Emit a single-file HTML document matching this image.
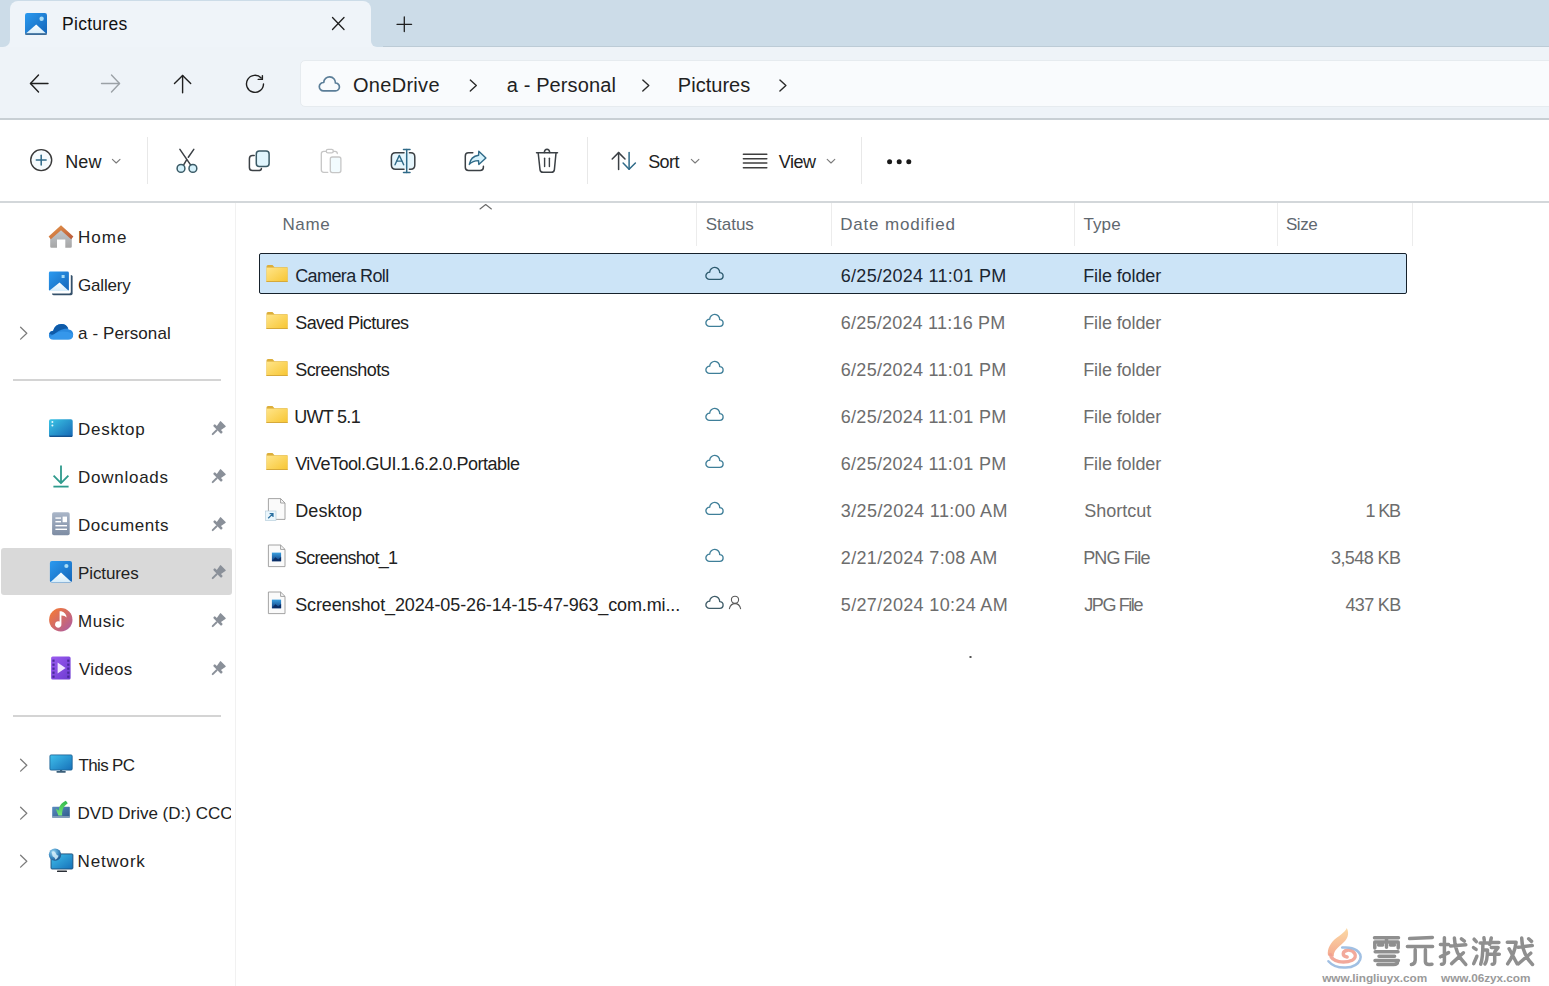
<!DOCTYPE html>
<html><head><meta charset="utf-8"><title>Pictures - File Explorer</title>
<style>
*{margin:0;padding:0;box-sizing:border-box}
html,body{width:1549px;height:986px;overflow:hidden;background:#fff;font-family:"Liberation Sans",sans-serif;color:#1a1a1a}
.a{position:absolute}
.t{position:absolute;white-space:nowrap;line-height:1}
#ov{position:absolute;left:0;top:0}
</style></head><body>
<div class="a" style="left:0px;top:0px;width:1549px;height:47px;background:#ccdce8"></div>
<div class="a" style="left:0px;top:46px;width:1549px;height:1px;background:#bccbd6"></div>
<div class="a" style="left:0px;top:36px;width:20px;height:14px;background:#eff4f9"></div>
<div class="a" style="left:0px;top:36px;width:10px;height:11px;background:#ccdce8;border-radius:0 0 7px 0"></div>
<div class="a" style="left:362px;top:36px;width:20px;height:14px;background:#eff4f9"></div>
<div class="a" style="left:371px;top:36px;width:12px;height:11px;background:#ccdce8;border-radius:0 0 0 6px"></div>
<div class="a" style="left:10px;top:1px;width:361px;height:50px;background:#eff4f9;border-radius:8px 8px 0 0"></div>
<div class="a" style="left:0px;top:47px;width:1549px;height:71px;background:#eef3f8"></div>
<div class="a" style="left:300px;top:60px;width:1260px;height:47px;background:#f9fbfd;border-radius:5px;border:1px solid #e6ebef"></div>
<div class="a" style="left:0px;top:118px;width:1549px;height:2px;background:#c8cfd4"></div>
<div class="a" style="left:0px;top:201px;width:1549px;height:2px;background:#d3d7da"></div>
<div class="a" style="left:147px;top:137px;width:1px;height:47px;background:#e8e8e8"></div>
<div class="a" style="left:587px;top:137px;width:1px;height:47px;background:#e8e8e8"></div>
<div class="a" style="left:861px;top:137px;width:1px;height:47px;background:#e8e8e8"></div>
<div class="a" style="left:235px;top:203px;width:1px;height:783px;background:#f1f1f1"></div>
<div class="a" style="left:1px;top:548px;width:231px;height:47px;background:#d9d9d9;border-radius:3px"></div>
<div class="a" style="left:13px;top:379px;width:208px;height:2px;background:#d4d4d4"></div>
<div class="a" style="left:13px;top:715px;width:208px;height:2px;background:#d4d4d4"></div>
<div class="a" style="left:696px;top:203px;width:1px;height:43px;background:#ececec"></div>
<div class="a" style="left:831px;top:203px;width:1px;height:43px;background:#ececec"></div>
<div class="a" style="left:1074px;top:203px;width:1px;height:43px;background:#ececec"></div>
<div class="a" style="left:1277px;top:203px;width:1px;height:43px;background:#ececec"></div>
<div class="a" style="left:1412px;top:203px;width:1px;height:43px;background:#ececec"></div>
<div class="a" style="left:259px;top:253px;width:1148px;height:41px;background:#cce4f7;border:1.5px solid #16212b;border-radius:2px"></div>
<svg id="ov" width="1549" height="986" viewBox="0 0 1549 986">
<defs>
<linearGradient id="gPic" x1="0" y1="0" x2="1" y2="1"><stop offset="0" stop-color="#2b9af0"/><stop offset="1" stop-color="#1565b8"/></linearGradient>
<linearGradient id="gMnt" x1="0" y1="0" x2="0" y2="1"><stop offset="0" stop-color="#ffffff"/><stop offset="1" stop-color="#d5ecfa"/></linearGradient>
<linearGradient id="gRoof" x1="0" y1="0" x2="1" y2="1"><stop offset="0" stop-color="#e89a4a"/><stop offset="1" stop-color="#b8583a"/></linearGradient>
<linearGradient id="gHouse" x1="0" y1="0" x2="0" y2="1"><stop offset="0" stop-color="#c4cad0"/><stop offset="1" stop-color="#a6a6a6"/></linearGradient>
<linearGradient id="gOD" x1="0" y1="0" x2="0" y2="1"><stop offset="0" stop-color="#0f5fb0"/><stop offset="1" stop-color="#2b8fe0"/></linearGradient>
<linearGradient id="gDesk" x1="0" y1="0" x2="1" y2="1"><stop offset="0" stop-color="#3cc6e6"/><stop offset="1" stop-color="#1566b4"/></linearGradient>
<linearGradient id="gDoc" x1="0" y1="0" x2="0" y2="1"><stop offset="0" stop-color="#aab6c8"/><stop offset="1" stop-color="#7d8ca3"/></linearGradient>
<linearGradient id="gMus" x1="0" y1="0" x2="1" y2="1"><stop offset="0" stop-color="#fb7c2c"/><stop offset="1" stop-color="#a85aa8"/></linearGradient>
<linearGradient id="gVid" x1="0" y1="0" x2="1" y2="1"><stop offset="0" stop-color="#9b5cf0"/><stop offset="1" stop-color="#6c3ad0"/></linearGradient>
<linearGradient id="gMon" x1="0" y1="0" x2="1" y2="1"><stop offset="0" stop-color="#40c0ec"/><stop offset="1" stop-color="#1670b8"/></linearGradient>
<linearGradient id="gDvd" x1="0" y1="0" x2="1" y2="1"><stop offset="0" stop-color="#5a8cc0"/><stop offset="1" stop-color="#2d5a8a"/></linearGradient>
<linearGradient id="gGrn" x1="0" y1="0" x2="0" y2="1"><stop offset="0" stop-color="#2fb84a"/><stop offset="1" stop-color="#7ae87a"/></linearGradient>
<radialGradient id="gGlobe" cx="0.35" cy="0.3" r="0.75"><stop offset="0" stop-color="#9ad6f2"/><stop offset="0.6" stop-color="#3a88c0"/><stop offset="1" stop-color="#1c4f86"/></radialGradient>
<linearGradient id="gFold" x1="0" y1="0" x2="1" y2="1"><stop offset="0" stop-color="#ffe58a"/><stop offset="1" stop-color="#f7c531"/></linearGradient>
<linearGradient id="gImg" x1="0" y1="0" x2="0" y2="1"><stop offset="0" stop-color="#3ba0e0"/><stop offset="1" stop-color="#0e3c80"/></linearGradient>
<symbol id="folder" overflow="visible">
 <path d="M0.5 1.5 Q0.5 0 2 0 L6.5 0 L8.5 2.2 L21.5 2.2 L21.5 17 L0.5 17 Z" fill="#dcae3a"/>
 <rect x="0.5" y="2.6" width="21" height="14.4" fill="url(#gFold)"/>
 <rect x="0.5" y="16" width="21" height="1" fill="#d6a93a"/>
</symbol>
<symbol id="pin" overflow="visible">
 <g transform="translate(5.4,9.0) rotate(45)" fill="#8a9099">
  <path d="M-3.4 -8.4 L3.4 -8.4 Q4 -8.4 3.8 -7.6 L2.8 -1.4 L-2.8 -1.4 L-3.8 -7.6 Q-4 -8.4 -3.4 -8.4 Z"/>
  <rect x="-5.8" y="-2.2" width="11.6" height="2.6" rx="1.1"/>
  <rect x="-0.95" y="0" width="1.9" height="7.4" rx="0.9"/>
 </g>
</symbol>
<symbol id="scloud" overflow="visible">
 <path d="M4.2 12.6 A3.6 3.6 0 1 1 4.404 5.406 A5 5 0 1 1 14.396 5.799 A3.4 3.4 0 1 1 14.4 12.6 Z" fill="none" stroke-linejoin="round"/>
</symbol>
<symbol id="chev" overflow="visible"><polyline points="0.5,0.5 6.5,6 0.5,11.5" fill="none" stroke-width="1.4" stroke-linecap="round" stroke-linejoin="round"/></symbol>
</defs>
<g transform="translate(25,13)"><rect x="0" y="0" width="22" height="21.6" rx="2.2" fill="url(#gPic)"/><path d="M0.6 20.8 L11.2 11.6 L21.4 20.8 Z" fill="url(#gMnt)"/><rect x="0.3" y="20.4" width="21.4" height="1.3" fill="#1d4f7c"/><circle cx="16.6" cy="5.8" r="2.2" fill="#a6dcf7"/></g>
<line x1="332.5" y1="17.5" x2="344" y2="29.5" stroke="#1f1f1f" stroke-width="1.3" stroke-linecap="round" />
<line x1="344" y1="17.5" x2="332.5" y2="29.5" stroke="#1f1f1f" stroke-width="1.3" stroke-linecap="round" />
<line x1="404.3" y1="17" x2="404.3" y2="31.5" stroke="#1f1f1f" stroke-width="1.3" stroke-linecap="round" />
<line x1="397" y1="24.3" x2="411.6" y2="24.3" stroke="#1f1f1f" stroke-width="1.3" stroke-linecap="round" />
<line x1="30.5" y1="83.5" x2="48" y2="83.5" stroke="#1f1f1f" stroke-width="1.4" stroke-linecap="round" />
<polyline points="38.5,75 30.5,83.5 38.5,92" stroke="#1f1f1f" stroke-width="1.4" fill="none" stroke-linecap="round" stroke-linejoin="round" />
<line x1="101.5" y1="83.5" x2="119.5" y2="83.5" stroke="#9ba1a6" stroke-width="1.4" stroke-linecap="round" />
<polyline points="111.5,75 119.5,83.5 111.5,92" stroke="#9ba1a6" stroke-width="1.4" fill="none" stroke-linecap="round" stroke-linejoin="round" />
<line x1="182.6" y1="75.5" x2="182.6" y2="92.7" stroke="#1f1f1f" stroke-width="1.4" stroke-linecap="round" />
<polyline points="174.5,83.5 182.6,75.5 190.7,83.5" stroke="#1f1f1f" stroke-width="1.4" fill="none" stroke-linecap="round" stroke-linejoin="round" />
<path d="M263.5 83.9 A8.5 8.5 0 1 1 261.2 78.0" stroke="#1f1f1f" stroke-width="1.4" fill="none" stroke-linecap="round" stroke-linejoin="round" />
<polyline points="262.4,75.6 262.4,79.4 258.2,79.4" stroke="#1f1f1f" stroke-width="1.4" fill="none" stroke-linecap="round" stroke-linejoin="round" />
<g transform="translate(318.6,76.2) scale(1.17)"><use href="#scloud" x="0" y="0" stroke="#5b7e98" stroke-width="1.45"/></g>
<use href="#chev" x="469.8" y="79.6" stroke="#2a2a2a"/>
<use href="#chev" x="642.3" y="79.6" stroke="#2a2a2a"/>
<use href="#chev" x="779.4" y="79.6" stroke="#2a2a2a"/>
<circle cx="41.2" cy="160.1" r="10.5" fill="#f6fbfd" stroke="#3a3a3a" stroke-width="1.4"/>
<line x1="41.2" y1="155.2" x2="41.2" y2="165" stroke="#2f6a88" stroke-width="1.5" stroke-linecap="round" />
<line x1="36.3" y1="160.1" x2="46.1" y2="160.1" stroke="#2f6a88" stroke-width="1.5" stroke-linecap="round" />
<polyline points="112.4,159.3 116.2,163 120.0,159.3" stroke="#7a7a7a" stroke-width="1.1" fill="none" stroke-linecap="round" stroke-linejoin="round" />
<polyline points="691.3,159.3 695.0999999999999,163 698.9,159.3" stroke="#7a7a7a" stroke-width="1.1" fill="none" stroke-linecap="round" stroke-linejoin="round" />
<polyline points="827.2,159.3 831.0,163 834.8000000000001,159.3" stroke="#7a7a7a" stroke-width="1.1" fill="none" stroke-linecap="round" stroke-linejoin="round" />
<line x1="179.9" y1="149.4" x2="190.4" y2="164.6" stroke="#3b4045" stroke-width="1.5" stroke-linecap="round" />
<line x1="193.8" y1="149.4" x2="188.3" y2="157.2" stroke="#3b4045" stroke-width="1.5" stroke-linecap="round" />
<line x1="186.6" y1="159.8" x2="183.8" y2="164.6" stroke="#3b4045" stroke-width="1.5" stroke-linecap="round" />
<circle cx="181" cy="168.4" r="3.9" fill="#d4f1fb" stroke="#3a5a66" stroke-width="1.5"/><circle cx="192.9" cy="168.4" r="3.9" fill="#d4f1fb" stroke="#3a5a66" stroke-width="1.5"/>
<path d="M254.2 155.6 L252.6 155.6 Q249.4 155.6 249.4 158.8 L249.4 167.4 Q249.4 170.5 252.6 170.5 L258.4 170.5 Q261.2 170.5 261.4 168.6" stroke="#3b4045" stroke-width="1.5" fill="none" stroke-linecap="round" stroke-linejoin="round" />
<rect x="256.3" y="151" width="12.8" height="15.6" rx="3" fill="#e0f5fd" stroke="#3a5a66" stroke-width="1.5"/>
<path d="M327.8 172.3 L323.8 172.3 Q321.3 172.3 321.3 169.8 L321.3 153.8 Q321.3 151.4 323.8 151.4 L326.2 151.4 M333.4 151.4 L335 151.4 Q337.3 151.4 337.3 153.6" stroke="#c6c6c6" stroke-width="1.3" fill="none" stroke-linecap="round" stroke-linejoin="round" />
<rect x="326.3" y="149.3" width="7" height="3.6" rx="1.6" fill="none" stroke="#c6c6c6" stroke-width="1.3"/>
<rect x="330.3" y="157" width="10.6" height="15.6" rx="2" fill="#f2fbfe" stroke="#c6c6c6" stroke-width="1.3"/>
<rect x="392" y="153.2" width="22" height="15.6" rx="4" fill="#e6f6fd"/>
<path d="M404 152.8 L395.6 152.8 Q391.4 152.8 391.4 157 L391.4 165.1 Q391.4 169.3 395.6 169.3 L404 169.3" stroke="#3b4045" stroke-width="1.5" fill="none" stroke-linecap="round" stroke-linejoin="round" />
<path d="M409.4 152.8 L410.8 152.8 Q414.8 152.8 414.8 157 L414.8 165.1 Q414.8 169.3 410.8 169.3 L409.4 169.3" stroke="#3b4045" stroke-width="1.5" fill="none" stroke-linecap="round" stroke-linejoin="round" />
<line x1="406.7" y1="149.5" x2="406.7" y2="172.5" stroke="#2f6a88" stroke-width="1.5" stroke-linecap="round" />
<line x1="403.5" y1="149.5" x2="410" y2="149.5" stroke="#2f6a88" stroke-width="1.5" stroke-linecap="round" />
<line x1="403.5" y1="172.5" x2="410" y2="172.5" stroke="#2f6a88" stroke-width="1.5" stroke-linecap="round" />
<polyline points="395,164.8 399.3,155.4 403.7,164.8" stroke="#2f6a88" stroke-width="1.4" fill="none" stroke-linecap="round" stroke-linejoin="round" />
<line x1="396.7" y1="161.2" x2="401.9" y2="161.2" stroke="#2f6a88" stroke-width="1.3" stroke-linecap="round" />
<path d="M472.8 152.8 L468.5 152.8 Q465.3 152.8 465.3 156 L465.3 167.3 Q465.3 170.5 468.5 170.5 L480.2 170.5 Q483.4 170.5 483.4 167.3 L483.4 166.3" stroke="#3b4045" stroke-width="1.5" fill="none" stroke-linecap="round" stroke-linejoin="round" />
<path d="M469.3 164.4 Q470.6 156.4 478.6 155.2 L478.8 151.2 L485.9 157.9 L478.8 164.4 L478.5 160.6 Q472.6 160.6 469.3 164.4 Z" stroke="#2f6a88" stroke-width="1.4" fill="#d6f2fc" stroke-linecap="round" stroke-linejoin="round" />
<line x1="536.5" y1="152.8" x2="557.5" y2="152.8" stroke="#3b4045" stroke-width="1.5" stroke-linecap="round" />
<path d="M544.2 152.6 Q544.6 149.3 547 149.3 Q549.4 149.3 549.8 152.6" stroke="#3b4045" stroke-width="1.4" fill="none" stroke-linecap="round" stroke-linejoin="round" />
<path d="M538.2 153 L540 169.6 Q540.3 172.3 543 172.3 L551.4 172.3 Q554.1 172.3 554.4 169.6 L556 153" stroke="#3b4045" stroke-width="1.5" fill="none" stroke-linecap="round" stroke-linejoin="round" />
<line x1="544.6" y1="158.3" x2="544.6" y2="166.5" stroke="#3b4045" stroke-width="1.4" stroke-linecap="round" />
<line x1="549.4" y1="158.3" x2="549.4" y2="166.5" stroke="#3b4045" stroke-width="1.4" stroke-linecap="round" />
<line x1="618.6" y1="152.6" x2="618.6" y2="169.5" stroke="#3b4045" stroke-width="1.5" stroke-linecap="round" />
<polyline points="612.2,159 618.6,152.6 625,159" stroke="#3b4045" stroke-width="1.5" fill="none" stroke-linecap="round" stroke-linejoin="round" />
<line x1="629.1" y1="152.6" x2="629.1" y2="169.3" stroke="#2f6a88" stroke-width="1.5" stroke-linecap="round" />
<polyline points="623.1,163 629.1,169.3 635.4,163" stroke="#2f6a88" stroke-width="1.5" fill="none" stroke-linecap="round" stroke-linejoin="round" />
<line x1="743.4" y1="154.2" x2="766.8" y2="154.2" stroke="#3f3f3f" stroke-width="1.5" stroke-linecap="round" />
<line x1="743.4" y1="158.7" x2="766.8" y2="158.7" stroke="#3f3f3f" stroke-width="1.5" stroke-linecap="round" />
<line x1="743.4" y1="163.1" x2="766.8" y2="163.1" stroke="#3f3f3f" stroke-width="1.5" stroke-linecap="round" />
<line x1="743.4" y1="167.7" x2="766.8" y2="167.7" stroke="#3f3f3f" stroke-width="1.5" stroke-linecap="round" />
<circle cx="889.6" cy="161.8" r="2.5" fill="#1a1a1a"/>
<circle cx="899.2" cy="161.8" r="2.5" fill="#1a1a1a"/>
<circle cx="908.8" cy="161.8" r="2.5" fill="#1a1a1a"/>
<polyline points="480,209 485.7,204.5 491.4,209" stroke="#6b6b6b" stroke-width="1.1" fill="none" stroke-linecap="round" stroke-linejoin="round" />
<g><path d="M50.2 237.6 L50.2 246.6 Q50.2 247.8 51.4 247.8 L57 247.8 L57 239.6 L65.3 239.6 L65.3 247.8 L70.6 247.8 Q71.8 247.8 71.8 246.6 L71.8 237.6 L61 228.4 Z" fill="url(#gHouse)"/><path d="M48.6 236.4 L61 225.2 L73.4 236.4 L71.2 239.2 L61 230.2 L50.8 239.2 Z" fill="url(#gRoof)"/></g>
<g><rect x="52" y="275" width="20.6" height="20.2" rx="1.6" fill="#34506a"/><rect x="50.6" y="273.4" width="20.2" height="20" rx="1.4" fill="#ffffff"/><rect x="48.9" y="271.6" width="20" height="19.4" rx="1.4" fill="url(#gPic)"/><path d="M48.9 291 L59.6 282.4 L68.9 291 Z" fill="url(#gMnt)"/><rect x="61.6" y="275" width="3" height="3" fill="#a6dcf7"/></g>
<path d="M53.4 339.6 Q48.9 339.6 48.9 335.2 Q48.9 331.2 53.2 330.8 Q55 324 61.4 324 Q66.8 324 68.6 329.4 Q73.2 330 73.2 334.6 Q73.2 339.6 68.2 339.6 Z" fill="#2a8ae0"/><path d="M49.2 333.6 Q50.2 331 53.2 330.8 Q55 324 61.4 324 Q66.2 324 68.2 328.4 Q61 328.6 55.4 333.2 Q52 336 49.2 333.6 Z" fill="#0e5aa8"/><path d="M49.6 337.4 Q56 332 62 331.6 Q68 331.4 73 334 Q73 339.6 68.2 339.6 L53.4 339.6 Q50.4 339.6 49.6 337.4 Z" fill="#3a9cf0" opacity="0.7"/>
<rect x="49" y="419.2" width="23.7" height="17.8" rx="1.8" fill="url(#gDesk)"/><circle cx="52.4" cy="422" r="1" fill="#e6f7fd"/><circle cx="52.4" cy="425.6" r="1" fill="#e6f7fd"/><rect x="49.5" y="435.6" width="22.7" height="1.4" fill="#14528f"/>
<line x1="61" y1="465.6" x2="61" y2="483" stroke="#2e9a8c" stroke-width="1.8"/><polyline points="53.6,475.6 61,483.2 68.4,475.6" fill="none" stroke="#2e9a8c" stroke-width="1.8" stroke-linejoin="round"/><line x1="53.4" y1="486.6" x2="68.6" y2="486.6" stroke="#2e9a8c" stroke-width="1.8"/>
<rect x="52.1" y="512.3" width="17.6" height="23" rx="1.8" fill="url(#gDoc)"/><rect x="55.4" y="517.4" width="5.6" height="1.4" fill="#fff"/><rect x="55.4" y="521" width="5.6" height="1.4" fill="#fff"/><rect x="62.6" y="516.6" width="4.4" height="5.6" fill="#fff"/><rect x="55.4" y="525" width="11.6" height="1.4" fill="#fff"/><rect x="55.4" y="528.6" width="11.6" height="1.4" fill="#fff"/>
<g><rect x="49.9" y="561" width="22.1" height="21.6" rx="2" fill="url(#gPic)"/><path d="M50.4 582.2 L61 572.4 L71.6 582.2 Z" fill="url(#gMnt)"/><circle cx="66.4" cy="566" r="2.1" fill="#a6dcf7"/></g>
<circle cx="60.8" cy="619.8" r="11.7" fill="url(#gMus)"/><path d="M61.4 611.2 L61.4 624.2 A3.2 3.2 0 1 1 59.6 621.6 L59.6 611.2 Z M61.4 611.2 Q66.4 613 66.6 617.6 Q64.6 615.2 61.4 615.4 Z" fill="#fff"/>
<rect x="51.1" y="656.4" width="19.5" height="23.2" rx="1.6" fill="url(#gVid)"/>
<rect x="52.4" y="659.6" width="2.2" height="2.2" fill="#4a2a9a"/><rect x="67.2" y="659.6" width="2.2" height="2.2" fill="#4a2a9a"/>
<rect x="52.4" y="663.6" width="2.2" height="2.2" fill="#4a2a9a"/><rect x="67.2" y="663.6" width="2.2" height="2.2" fill="#4a2a9a"/>
<rect x="52.4" y="667.6" width="2.2" height="2.2" fill="#4a2a9a"/><rect x="67.2" y="667.6" width="2.2" height="2.2" fill="#4a2a9a"/>
<rect x="52.4" y="671.6" width="2.2" height="2.2" fill="#4a2a9a"/><rect x="67.2" y="671.6" width="2.2" height="2.2" fill="#4a2a9a"/>
<rect x="52.4" y="675.6" width="2.2" height="2.2" fill="#4a2a9a"/><rect x="67.2" y="675.6" width="2.2" height="2.2" fill="#4a2a9a"/>
<path d="M57.6 662.6 L65.6 668 L57.6 673.4 Z" fill="#f1e6ff"/>
<rect x="49.9" y="754.9" width="22.3" height="15.2" rx="1.2" fill="url(#gMon)" stroke="#1b5e90" stroke-width="0.8"/><rect x="56.4" y="771" width="9.4" height="1.8" rx="0.8" fill="#3b5f7a"/><rect x="60" y="770" width="2.2" height="1.6" fill="#3b5f7a"/>
<rect x="52.2" y="806.8" width="17.6" height="10.9" rx="0.6" fill="url(#gDvd)"/><rect x="52.2" y="816.2" width="17.6" height="1.5" fill="#8ea6be"/><path d="M55.6 808.4 L58.4 815.6 L62.2 815.6 C61.8 810.4 63.4 806.2 67.8 803.2 L65.8 800.8 C60.8 803.2 59 806.4 58.8 810.4 Z" fill="url(#gGrn)"/>
<rect x="51" y="853.9" width="21.9" height="15.1" rx="1" fill="url(#gMon)" stroke="#1d4e78" stroke-width="0.9"/><rect x="57" y="870.4" width="10" height="1.6" rx="0.6" fill="#2a2f36"/><circle cx="55" cy="854.6" r="6.2" fill="url(#gGlobe)"/><path d="M51.6 851.8 Q53.8 850.4 55.2 852.2 Q56.2 855 58.6 855.8 Q57.8 858.4 55.6 859.8 Q54.8 857 52.6 856.2 Z" fill="#d6eefa" opacity="0.85"/>
<use href="#pin" x="211.9" y="420.6"/>
<use href="#pin" x="211.9" y="468.6"/>
<use href="#pin" x="211.9" y="516.6"/>
<use href="#pin" x="211.9" y="564.6"/>
<use href="#pin" x="211.9" y="612.6"/>
<use href="#pin" x="211.9" y="660.6"/>
<polyline points="20.6,327.3 26.8,333.2 20.6,339.1" fill="none" stroke="#7c7c7c" stroke-width="1.3" stroke-linecap="round" stroke-linejoin="round"/>
<polyline points="20.6,759.3 26.8,765.2 20.6,771.1" fill="none" stroke="#7c7c7c" stroke-width="1.3" stroke-linecap="round" stroke-linejoin="round"/>
<polyline points="20.6,807.3 26.8,813.2 20.6,819.1" fill="none" stroke="#7c7c7c" stroke-width="1.3" stroke-linecap="round" stroke-linejoin="round"/>
<polyline points="20.6,855.3 26.8,861.2 20.6,867.1" fill="none" stroke="#7c7c7c" stroke-width="1.3" stroke-linecap="round" stroke-linejoin="round"/>
<use href="#folder" x="266" y="265"/>
<use href="#folder" x="266" y="312"/>
<use href="#folder" x="266" y="359"/>
<use href="#folder" x="266" y="406"/>
<use href="#folder" x="266" y="453"/>
<path d="M268.4 498.6 L280.6 498.6 L285 503 L285 519.4 L268.4 519.4 Z" fill="#fafafa" stroke="#9a9a9a" stroke-width="0.9"/><path d="M280.6 498.6 L280.6 503 L285 503" fill="none" stroke="#9a9a9a" stroke-width="0.9"/>
<rect x="265.4" y="511" width="10.6" height="9.6" fill="#eaf6fc" stroke="#b0c8d8" stroke-width="0.6"/><path d="M268.2 518.2 L273 513.6 M269.6 513.6 L273 513.6 L273 517" fill="none" stroke="#2a6fa0" stroke-width="1.2"/>
<path d="M268.4 545 L280.6 545 L285 549.4 L285 566.6 L268.4 566.6 Z" fill="#fafafa" stroke="#9a9a9a" stroke-width="0.9"/><path d="M280.6 545 L280.6 549.4 L285 549.4" fill="none" stroke="#9a9a9a" stroke-width="0.9"/>
<rect x="271.9" y="552.6" width="9.2" height="8.6" fill="url(#gImg)"/><path d="M271.9 561.2 L275.4 557.2 L278.2 559.4 L281.1 557 L281.1 561.2 Z" fill="#0a2e66"/>
<path d="M268.4 592 L280.6 592 L285 596.4 L285 613.6 L268.4 613.6 Z" fill="#fafafa" stroke="#9a9a9a" stroke-width="0.9"/><path d="M280.6 592 L280.6 596.4 L285 596.4" fill="none" stroke="#9a9a9a" stroke-width="0.9"/>
<rect x="271.9" y="599.6" width="9.2" height="8.6" fill="url(#gImg)"/><path d="M271.9 608.2 L275.4 604.2 L278.2 606.4 L281.1 604 L281.1 608.2 Z" fill="#0a2e66"/>
<use href="#scloud" x="705.3" y="266.8" stroke="#2d5a6e" stroke-width="1.35"/>
<use href="#scloud" x="705.3" y="313.8" stroke="#3f7f99" stroke-width="1.35"/>
<use href="#scloud" x="705.3" y="360.8" stroke="#3f7f99" stroke-width="1.35"/>
<use href="#scloud" x="705.3" y="407.8" stroke="#3f7f99" stroke-width="1.35"/>
<use href="#scloud" x="705.3" y="454.8" stroke="#3f7f99" stroke-width="1.35"/>
<use href="#scloud" x="705.3" y="501.8" stroke="#3f7f99" stroke-width="1.35"/>
<use href="#scloud" x="705.3" y="548.8" stroke="#3f7f99" stroke-width="1.35"/>
<use href="#scloud" x="705.3" y="595.8" stroke="#3f5c68" stroke-width="1.35"/>
<circle cx="735" cy="599.8" r="3.6" fill="none" stroke="#5a5a5a" stroke-width="1.1"/><path d="M729.4 608.6 Q730.6 603.6 735 603.6 Q739.4 603.6 740.6 608.6" fill="none" stroke="#5a5a5a" stroke-width="1.1" stroke-linecap="round"/>
<rect x="969.5" y="656" width="2" height="2" fill="#555"/>
<g id="wm">
 <defs><linearGradient id="gFl" x1="0" y1="0" x2="0" y2="1"><stop offset="0" stop-color="#fbd59a"/><stop offset="1" stop-color="#f4a184"/></linearGradient></defs>
 <path d="M1346.8 928 C1349.8 934 1347.6 939.6 1341.4 944.4 C1336.4 948.4 1333.4 952 1333.8 956.4 L1328 955.6 C1326.8 948.6 1330.8 942.4 1337 937.6 C1342 933.6 1345.6 931.4 1346.8 928 Z" fill="url(#gFl)" opacity="0.9"/>
 <path d="M1330.4 954.6 C1331.6 962.6 1345 963.4 1352.2 960.2 C1358.4 957.2 1354.6 949.4 1347.4 950.2 C1342.2 951 1341.6 956 1347.2 957" fill="none" stroke="#f1a090" stroke-width="3.4" stroke-linecap="round" opacity="0.9"/>
 <path d="M1328.4 961.2 C1336.4 970.4 1356 969.6 1360.2 959.4 C1362.4 952.4 1354.6 946.2 1342.2 947.6" fill="none" stroke="#97b9e0" stroke-width="2.5" stroke-linecap="round" opacity="0.9"/>
 <g fill="none" stroke="#8f8f8f" stroke-width="3.5" stroke-linecap="round" stroke-linejoin="round">
  <g transform="translate(1373,936.2)">
   <path d="M1.5 1.6 L25.5 1.6 M13.5 1.6 L13.5 11 M1.8 11.8 L1.8 5.8 L25.2 5.8 L25.2 11.8 M5.6 8.8 L9.6 8.8 M17.4 8.8 L21.4 8.8 M2.2 15.6 L25 15.6 M6 20 L21.6 20 M2 24.2 L25.4 24.2 M4.8 28.4 L20.6 28.4 Q24.6 28.4 24.6 25"/>
  </g>
  <g transform="translate(1406,936.2)">
   <path d="M3.6 2.4 L26.4 1.2 M1.4 10.2 L26.6 10.2 M9.2 13.6 L9.2 24 Q9 28 5.4 28.4 M19.4 13.6 L19.4 25.6 Q19.6 28.2 23.2 28.2 L26 28"/>
  </g>
  <g transform="translate(1439,936.2)">
   <path d="M1.4 8.4 L9.6 8.4 M5.4 1.6 L5.4 25.4 Q5.2 28.4 2.4 28 M1.4 20.6 L9.6 16.4 M11.6 9.8 L26.8 8.6 M15.4 1.8 Q15.6 17 26.8 28.2 M12.6 27.4 L24.4 16.6 M22.4 2.6 L25.4 5"/>
  </g>
  <g transform="translate(1472.3,936.2)">
   <path d="M1.8 3 L4 5.4 M1.2 11.4 L3.8 13.2 M1.4 27.4 L4.6 20 M11.6 1.6 L12 4 M7.8 6.8 L15.8 6.8 M10.6 6.8 Q10.6 22 8.4 28 M10.8 13.8 L15.2 13.8 Q15 25 12.6 27.8 M19 1.8 L17.4 8.2 M18.4 6.2 L26.6 6.2 M19 11.4 L25.8 11.4 L22.6 15.4 M16.8 18 L27 18 M22.4 15.8 L22.4 25.6 Q22.4 28.2 19.8 28"/>
  </g>
  <g transform="translate(1506.1,936.2)">
   <path d="M1.2 6 L10 6 Q8.4 18 1.6 27.6 M3 12.6 L11 27.6 M12.2 11 L26.2 9.4 M15.6 1.8 Q16 18 26.4 28.2 M12.4 27.6 L24.6 17 M22.6 2.6 L25.4 5.2"/>
  </g>
 </g>
 <text x="1322.2" y="982.4" font-family="Liberation Sans" font-weight="bold" font-size="11.8" fill="#9a9a9a" letter-spacing="-0.05">www.lingliuyx.com</text>
 <text x="1441" y="982.4" font-family="Liberation Sans" font-weight="bold" font-size="11.8" fill="#9a9a9a" letter-spacing="-0.05">www.06zyx.com</text>
</g>

</svg>
<div class="t" style="left:62.0px;top:16.2px;font-size:17.5px;color:#111;letter-spacing:0.29px;">Pictures</div>
<div class="t" style="left:353.0px;top:74.8px;font-size:20px;color:#222222;letter-spacing:0.29px;">OneDrive</div>
<div class="t" style="left:506.8px;top:74.8px;font-size:20px;color:#222222;letter-spacing:0.11px;">a - Personal</div>
<div class="t" style="left:677.8px;top:74.8px;font-size:20px;color:#222222;letter-spacing:0.03px;">Pictures</div>
<div class="t" style="left:65.2px;top:153.0px;font-size:18px;color:#222222;letter-spacing:0.15px;">New</div>
<div class="t" style="left:648.2px;top:153.0px;font-size:18px;color:#222222;letter-spacing:-0.60px;">Sort</div>
<div class="t" style="left:778.8px;top:153.0px;font-size:18px;color:#222222;letter-spacing:-0.47px;">View</div>
<div class="t" style="left:282.4px;top:216.3px;font-size:17px;color:#5f686f;letter-spacing:0.67px;">Name</div>
<div class="t" style="left:705.8px;top:216.3px;font-size:17px;color:#5f686f;letter-spacing:-0.04px;">Status</div>
<div class="t" style="left:840.2px;top:216.3px;font-size:17px;color:#5f686f;letter-spacing:0.82px;">Date modified</div>
<div class="t" style="left:1083.4px;top:216.3px;font-size:17px;color:#5f686f;letter-spacing:0.13px;">Type</div>
<div class="t" style="left:1286.0px;top:216.3px;font-size:17px;color:#5f686f;letter-spacing:-0.47px;">Size</div>
<div class="t" style="left:295.2px;top:266.6px;font-size:18px;color:#1b2631;letter-spacing:-0.60px;">Camera Roll</div>
<div class="t" style="left:840.8px;top:266.6px;font-size:18px;color:#1b2631;letter-spacing:0.27px;">6/25/2024 11:01 PM</div>
<div class="t" style="left:1083.2px;top:266.6px;font-size:18px;color:#1b2631;letter-spacing:-0.10px;">File folder</div>
<div class="t" style="left:295.2px;top:313.6px;font-size:18px;color:#222222;letter-spacing:-0.55px;">Saved Pictures</div>
<div class="t" style="left:840.8px;top:313.6px;font-size:18px;color:#6d6d6d;letter-spacing:0.22px;">6/25/2024 11:16 PM</div>
<div class="t" style="left:1083.2px;top:313.6px;font-size:18px;color:#6d6d6d;letter-spacing:-0.10px;">File folder</div>
<div class="t" style="left:295.2px;top:360.6px;font-size:18px;color:#222222;letter-spacing:-0.56px;">Screenshots</div>
<div class="t" style="left:840.8px;top:360.6px;font-size:18px;color:#6d6d6d;letter-spacing:0.27px;">6/25/2024 11:01 PM</div>
<div class="t" style="left:1083.2px;top:360.6px;font-size:18px;color:#6d6d6d;letter-spacing:-0.10px;">File folder</div>
<div class="t" style="left:294.2px;top:407.6px;font-size:18px;color:#222222;letter-spacing:-0.70px;">UWT 5.1</div>
<div class="t" style="left:840.8px;top:407.6px;font-size:18px;color:#6d6d6d;letter-spacing:0.27px;">6/25/2024 11:01 PM</div>
<div class="t" style="left:1083.2px;top:407.6px;font-size:18px;color:#6d6d6d;letter-spacing:-0.10px;">File folder</div>
<div class="t" style="left:295.2px;top:454.6px;font-size:18px;color:#222222;letter-spacing:-0.50px;">ViVeTool.GUI.1.6.2.0.Portable</div>
<div class="t" style="left:840.8px;top:454.6px;font-size:18px;color:#6d6d6d;letter-spacing:0.27px;">6/25/2024 11:01 PM</div>
<div class="t" style="left:1083.2px;top:454.6px;font-size:18px;color:#6d6d6d;letter-spacing:-0.10px;">File folder</div>
<div class="t" style="left:295.2px;top:501.6px;font-size:18px;color:#222222;letter-spacing:0.12px;">Desktop</div>
<div class="t" style="left:840.8px;top:501.6px;font-size:18px;color:#6d6d6d;letter-spacing:0.40px;">3/25/2024 11:00 AM</div>
<div class="t" style="left:1084.2px;top:501.6px;font-size:18px;color:#6d6d6d;letter-spacing:-0.01px;">Shortcut</div>
<div class="t" style="left:1365.6px;top:501.6px;font-size:18px;color:#6d6d6d;letter-spacing:-1.17px;">1 KB</div>
<div class="t" style="left:295.0px;top:548.6px;font-size:18px;color:#222222;letter-spacing:-0.74px;">Screenshot_1</div>
<div class="t" style="left:840.8px;top:548.6px;font-size:18px;color:#6d6d6d;letter-spacing:0.34px;">2/21/2024 7:08 AM</div>
<div class="t" style="left:1083.2px;top:548.6px;font-size:18px;color:#6d6d6d;letter-spacing:-0.83px;">PNG File</div>
<div class="t" style="left:1331.0px;top:548.6px;font-size:18px;color:#6d6d6d;letter-spacing:-0.59px;">3,548 KB</div>
<div class="t" style="left:295.2px;top:595.6px;font-size:18px;color:#222222;letter-spacing:-0.12px;">Screenshot_2024-05-26-14-15-47-963_com.mi...</div>
<div class="t" style="left:840.8px;top:595.6px;font-size:18px;color:#6d6d6d;letter-spacing:0.34px;">5/27/2024 10:24 AM</div>
<div class="t" style="left:1084.2px;top:595.6px;font-size:18px;color:#6d6d6d;letter-spacing:-1.39px;">JPG File</div>
<div class="t" style="left:1345.4px;top:595.6px;font-size:18px;color:#6d6d6d;letter-spacing:-0.64px;">437 KB</div>
<div class="t" style="left:78.0px;top:228.5px;font-size:17px;color:#222222;letter-spacing:1.00px;">Home</div>
<div class="t" style="left:78.0px;top:276.5px;font-size:17px;color:#222222;letter-spacing:-0.17px;">Gallery</div>
<div class="t" style="left:78.0px;top:324.5px;font-size:17px;color:#222222;letter-spacing:0.10px;">a - Personal</div>
<div class="t" style="left:78.0px;top:420.5px;font-size:17px;color:#222222;letter-spacing:0.72px;">Desktop</div>
<div class="t" style="left:78.0px;top:468.5px;font-size:17px;color:#222222;letter-spacing:0.74px;">Downloads</div>
<div class="t" style="left:78.0px;top:516.5px;font-size:17px;color:#222222;letter-spacing:0.57px;">Documents</div>
<div class="t" style="left:78.0px;top:564.5px;font-size:17px;color:#222222;letter-spacing:-0.11px;">Pictures</div>
<div class="t" style="left:78.0px;top:612.5px;font-size:17px;color:#222222;letter-spacing:0.55px;">Music</div>
<div class="t" style="left:79.0px;top:660.5px;font-size:17px;color:#222222;letter-spacing:0.30px;">Videos</div>
<div class="t" style="left:78.6px;top:756.5px;font-size:17px;color:#222222;letter-spacing:-0.67px;">This PC</div>
<div class="t" style="left:77.6px;top:804.5px;font-size:17px;color:#222222;letter-spacing:0.00px;width:153px;overflow:hidden;">DVD Drive (D:) CCC</div>
<div class="t" style="left:77.6px;top:852.5px;font-size:17px;color:#222222;letter-spacing:0.82px;">Network</div>
</body></html>
